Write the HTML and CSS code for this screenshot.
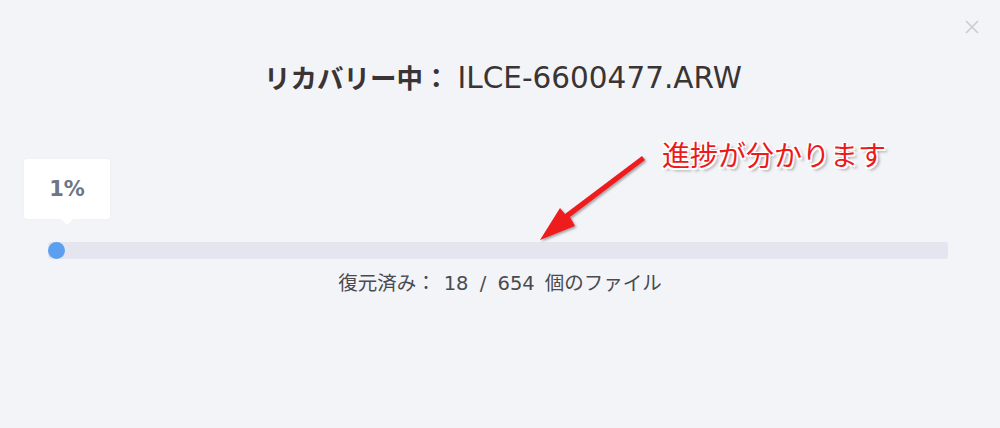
FILE: index.html
```
<!DOCTYPE html>
<html lang="ja">
<head>
   <meta charset="utf-8">
   <title>リカバリー中</title>
   <link rel="stylesheet" href="styles.css">
</head>
<body>
   <div class="dialog">
      <button class="close" aria-label="閉じる">
         <svg width="16" height="16" viewBox="0 0 16 16"><path d="M2 2L14 14M14 2L2 14" stroke="#c9ccd3" stroke-width="1.6"/></svg>
      </button>

      <h1 class="title"><b class="ja">リカバリー中：</b><span class="en">ILCE-6600477.ARW</span></h1>

      <div class="progress">
         <div class="bubble">1%</div>
         <div class="track">
            <div class="fill" style="width: 1%"></div>
         </div>
      </div>

      <div class="status"><span class="ja">復元済み：</span><span class="en">18 / 654</span> <span class="ja">個のファイル</span></div>

      <div class="note">進捗が分かります</div>
      <svg class="arrow" width="120" height="100" viewBox="0 0 120 100">
         <defs>
            <filter id="sh" x="-20%" y="-20%" width="140%" height="140%">
               <feDropShadow dx="1.5" dy="1.5" stdDeviation="1.2" flood-color="#000" flood-opacity="0.35"/>
            </filter>
         </defs>
         <path d="M107 6 L110 10 L35 67 L40 76 L5 90 L25 58 L30 64 Z" fill="#ee1c1c" filter="url(#sh)"/>
      </svg>
   </div>
</body>
</html>
```

FILE: styles.css
```
body {
   margin: 0;
   background: #f3f4f8;
   font-family: "DejaVu Sans", "Noto Sans CJK JP", sans-serif;
}

.ja {
   font-family: "Noto Sans CJK JP", sans-serif;
}

.en {
   font-family: "DejaVu Sans", sans-serif;
}

.dialog {
   position: relative;
   width: 1000px;
   height: 428px;
   box-sizing: border-box;
   padding-top: 55px;
}

.close {
   position: absolute;
   top: 19px;
   right: 20px;
   border: none;
   background: none;
   padding: 0;
   cursor: pointer;
}

.title {
   margin: 0;
   padding-left: 6px;
   text-align: center;
   font-weight: normal;
   line-height: 44px;
   color: #3a3434;
}

.title .ja {
   font-size: 26.5px;
   font-weight: bold;
   margin-right: 8px;
}

.title .en {
   font-size: 29.5px;
}

.progress {
   margin: 59px 52px 0 48px;
}

.bubble {
   position: relative;
   width: 86px;
   height: 60px;
   margin-left: -24px;
   background: #fff;
   border-radius: 3px;
   text-align: center;
   line-height: 60px;
   font-family: "DejaVu Sans", sans-serif;
   font-weight: bold;
   font-size: 21px;
   color: #6f7585;
   box-shadow: 0 0 3px rgba(0, 0, 0, 0.03);
}

.bubble::after {
   content: "";
   position: absolute;
   left: 37px;
   bottom: -6px;
   border-left: 6px solid transparent;
   border-right: 6px solid transparent;
   border-top: 6px solid #fff;
}

.track {
   margin-top: 23px;
   height: 17px;
   background: #e4e5ee;
   border-radius: 3px;
}

.fill {
   min-width: 17px;
   height: 17px;
   background: #5b9ff0;
   border-radius: 9px;
}

.status {
   margin-top: 7px;
   text-align: center;
   line-height: 32px;
   color: #4a4a4f;
   word-spacing: 5px;
}

.status .ja {
   font-size: 19.5px;
}

.status .en {
   font-size: 19.5px;
   margin-left: 8px;
}

.note {
   position: absolute;
   left: 662px;
   top: 134px;
   font-family: "Noto Sans CJK JP", sans-serif;
   font-size: 28px;
   color: #ec1a1a;
   text-shadow:
      -1.5px -1.5px 0 #fff, 1.5px -1.5px 0 #fff,
      -1.5px 1.5px 0 #fff, 1.5px 1.5px 0 #fff,
      3px 3px 3px rgba(0, 0, 0, 0.35);
}

.arrow {
   position: absolute;
   left: 535px;
   top: 150px;
}
```
